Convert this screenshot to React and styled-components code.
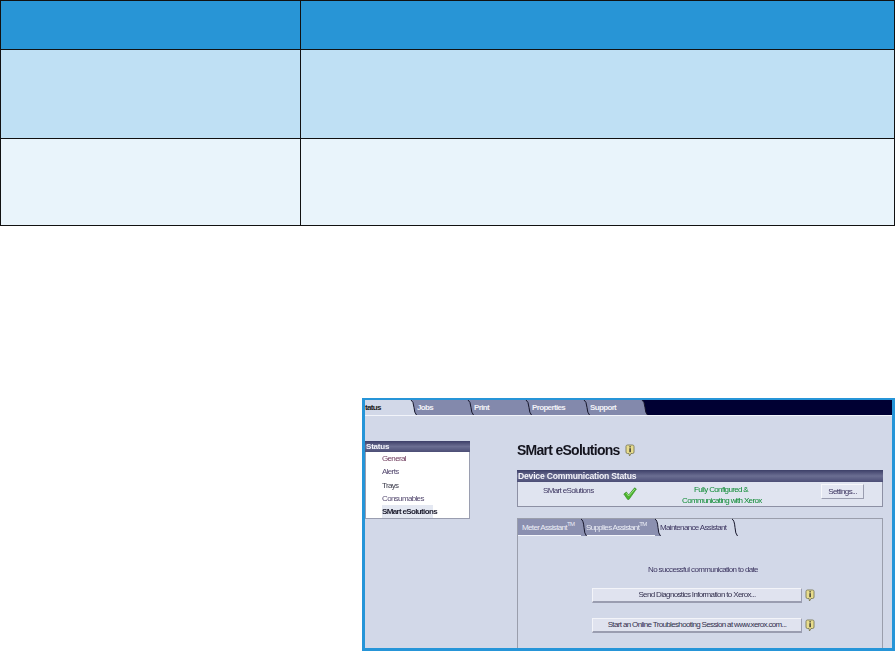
import React from "react";
import styled, { createGlobalStyle } from "styled-components";

const GlobalStyle = createGlobalStyle`
  html, body {
    margin: 0;
    padding: 0;
    background: #fff;
    overflow: hidden;
    font-family: "Liberation Sans", Arial, sans-serif;
  }
`;

const Page = styled.div`
  width: 895px;
  height: 651px;
  overflow: hidden;
`;

const Table = styled.div`
  display: grid;
  grid-template-columns: 300px 594px;
  grid-template-rows: 48px 89px 87px;
  border-top: 1px solid #111;
  border-right: 1px solid #111;
  border-bottom: 1px solid #111;
  width: 895px;
  box-sizing: border-box;
`;

const Cell = styled.div`
  background: ${(p) => p.$bg};
  border-left: 1px solid #111;
  border-top: ${(p) => (p.$ruled ? "1px solid #111" : "0")};
`;

const Shot = styled.div`
  margin: 172px 0 0 362px;
  width: 533px;
  height: 253px;
  box-sizing: border-box;
  border: 3px solid #2695d8;
  border-top-width: 2px;
  background: #d2d8e8;
  overflow: hidden;
  font-size: 8px;
  letter-spacing: -0.65px;
  color: #3c3560;
  white-space: nowrap;
`;

const Blurred = styled.div`
  filter: blur(0.4px);
`;

const TopBar = styled.div`
  display: flex;
  height: 15px;
  background: #000033;
  border-bottom: 1px solid #f2f4fa;
`;

const TopTab = styled.div`
  position: relative;
  width: ${(p) => p.$w}px;
  background: ${(p) => (p.$active ? "#d2d8e8" : "#8389ac")};
  color: ${(p) => (p.$active ? "#222" : "#f0f0f6")};
  font-weight: bold;
  line-height: 15px;
  padding-left: ${(p) => p.$pad}px;
  box-sizing: border-box;
`;

const Curve = styled.svg`
  position: absolute;
  right: -5px;
  top: 0;
  overflow: visible;
  z-index: 1;
`;

const Body = styled.div`
  display: flex;
  padding-top: 25px;
`;

const Side = styled.div`
  width: 105px;
  margin-right: 47px;
  flex: none;
`;

const BarHead = styled.div`
  height: ${(p) => p.$h}px;
  background: linear-gradient(#3d3f68, #6b6e92 50%, #4c4e76);
  color: #f4f4fa;
  font-size: ${(p) => p.$size}px;
  letter-spacing: -0.2px;
  font-weight: bold;
  line-height: ${(p) => p.$h}px;
  padding-left: 1px;
`;

const SideList = styled.div`
  background: #fff;
  border: 1px solid #9a9eb0;
  border-top: 0;
  padding: 0 0 0 16px;
  height: 66px;
`;

const SideItem = styled.div`
  height: 13.3px;
  line-height: 13.3px;
  color: ${(p) => p.$color || "#554a70"};
  font-weight: ${(p) => (p.$active ? "bold" : "normal")};
  background: ${(p) => (p.$active ? "#e4e8f2" : "transparent")};
  width: ${(p) => (p.$active ? "51px" : "auto")};
`;

const Main = styled.div`
  width: 366px;
  flex: none;
`;

const TitleRow = styled.div`
  display: flex;
  align-items: center;
  gap: 5px;
  height: 18px;
  margin-bottom: 11px;
`;

const Title = styled.div`
  font-size: 14px;
  font-weight: bold;
  color: #14141e;
  letter-spacing: -0.73px;
`;

const Panel = styled.div`
  background: #e0e4f0;
  border: 1px solid #8d90a4;
  border-top: 0;
  height: 24px;
  display: grid;
  grid-template-columns: 104px 60px 78px 1fr;
  align-items: center;
`;

const PanelName = styled.div`
  padding-left: 25px;
  margin-top: -7px;
`;

const Status = styled.div`
  color: #0c8a32;
  text-align: center;
  line-height: 10.5px;
  margin-top: 3px;
`;

const CheckWrap = styled.div`
  margin-left: 1px;
`;

const SmallButton = styled.div`
  width: 43px;
  height: 15px;
  margin-left: 61px;
  margin-top: -5px;
  box-sizing: border-box;
  background: #e4e7f2;
  border: 1px solid #f6f7fb;
  border-right-color: #9a9db0;
  border-bottom-color: #9a9db0;
  line-height: 13px;
  text-align: center;
`;

const TabPanel = styled.div`
  margin-top: 11px;
  height: 140px;
  border: 1px solid #9a9eac;
  border-bottom: 0;
`;

const SubTabs = styled.div`
  display: flex;
  height: 17px;
`;

const SubTab = styled.div`
  position: relative;
  width: ${(p) => p.$w}px;
  box-sizing: border-box;
  padding-left: 4px;
  line-height: 17px;
  background: ${(p) => (p.$active ? "transparent" : "#8b90b0")};
  color: ${(p) => (p.$active ? "#3c3560" : "#eceef6")};
  border-bottom: ${(p) => (p.$active ? "0" : "1px solid #f4f6fb")};

  sup {
    font-size: 6px;
    line-height: 0;
  }
`;

const Message = styled.div`
  text-align: center;
  margin-top: 28px;
  padding-left: 6px;
  height: 12px;
  line-height: 12px;
`;

const ActionRow = styled.div`
  display: flex;
  align-items: center;
  gap: 3px;
  margin: ${(p) => p.$top}px 0 0 74px;
`;

const ActionButton = styled.div`
  width: 210px;
  height: 15px;
  box-sizing: border-box;
  background: #e0e3ef;
  border-top: 1px solid #f3f4f9;
  border-left: 1px solid #f3f4f9;
  border-right: 1px solid #9a9db0;
  border-bottom: 2px solid #9a9db0;
  text-align: center;
  line-height: 12px;
  color: #33304e;
`;

function Info() {
  return (
    <svg width="10" height="13" viewBox="0 0 10 13">
      <path d="M1 2.5 Q1 1 2.5 1 H7.5 Q9 1 9 2.5 V8 Q9 9.5 7.5 9.5 H6 L4.5 12 L4 9.5 H2.5 Q1 9.5 1 8 Z" fill="#e8dc8c" stroke="#7c7a58" strokeWidth="0.9" />
      <rect x="4.4" y="4.2" width="1.4" height="4" fill="#333" />
      <rect x="4.4" y="2.2" width="1.4" height="1.2" fill="#333" />
    </svg>
  );
}

function Check() {
  return (
    <svg width="14" height="13" viewBox="0 0 14 13">
      <path d="M0.8 7 L3.4 5 L5.6 8 L11.6 0.8 L13.4 2 L6 12.4 L4.6 12.4 Z" fill="#4cb42e" stroke="#2f8a22" strokeWidth="0.6" />
      <path d="M3.4 6 L5.6 9 L11.8 2" fill="none" stroke="#a4e488" strokeWidth="0.9" />
    </svg>
  );
}

function TabCurve({ h, fill }) {
  return (
    <Curve width="6" height={h} viewBox={`0 0 6 ${h}`}>
      <path d={`M0 0 Q2.4 1 3 ${h * 0.5} Q3.4 ${h - 2} 5.5 ${h} H0 Z`} fill={fill} />
      <path d={`M0 0 Q2.4 1 3 ${h * 0.5} Q3.4 ${h - 2} 5.5 ${h}`} fill="none" stroke="#15152a" strokeWidth="1" />
    </Curve>
  );
}

const topTabs = [
  { label: "tatus", w: 47, pad: 0, active: true, fill: "#d2d8e8" },
  { label: "Jobs", w: 57, pad: 5, fill: "#8389ac" },
  { label: "Print", w: 58, pad: 5, fill: "#8389ac" },
  { label: "Properties", w: 58, pad: 5, fill: "#8389ac" },
  { label: "Support", w: 58, pad: 5, fill: "#8389ac" },
];

const sideItems = [
  { label: "General", color: "#6e3a5c" },
  { label: "Alerts" },
  { label: "Trays", color: "#3a3a4a" },
  { label: "Consumables" },
  { label: "SMart eSolutions", active: true, color: "#222233" },
];

export default function App() {
  return (
    <Page>
      <GlobalStyle />
      <Table>
        <Cell $bg="#2895d6" />
        <Cell $bg="#2895d6" />
        <Cell $bg="#bfe0f4" $ruled />
        <Cell $bg="#bfe0f4" $ruled />
        <Cell $bg="#e9f4fb" $ruled />
        <Cell $bg="#e9f4fb" $ruled />
      </Table>
      <Shot>
        <Blurred>
          <TopBar>
            {topTabs.map((t) => (
              <TopTab key={t.label} $w={t.w} $pad={t.pad} $active={t.active}>
                {t.label}
                <TabCurve h={15} fill={t.fill} />
              </TopTab>
            ))}
          </TopBar>
          <Body>
            <Side>
              <BarHead $h={11} $size={8}>Status</BarHead>
              <SideList>
                {sideItems.map((s) => (
                  <SideItem key={s.label} $color={s.color} $active={s.active}>
                    {s.label}
                  </SideItem>
                ))}
              </SideList>
            </Side>
            <Main>
              <TitleRow>
                <Title>SMart eSolutions</Title>
                <Info />
              </TitleRow>
              <BarHead $h={12} $size={8.6}>Device Communication Status</BarHead>
              <Panel>
                <PanelName>SMart eSolutions</PanelName>
                <CheckWrap>
                  <Check />
                </CheckWrap>
                <Status>
                  Fully Configured &amp;
                  <br />
                  Communicating with Xerox
                </Status>
                <SmallButton>Settings...</SmallButton>
              </Panel>
              <TabPanel>
                <SubTabs>
                  <SubTab $w={64}>
                    Meter Assistant<sup>TM</sup>
                    <TabCurve h={17} fill="#8b90b0" />
                  </SubTab>
                  <SubTab $w={74}>
                    Supplies Assistant<sup>TM</sup>
                    <TabCurve h={17} fill="#8b90b0" />
                  </SubTab>
                  <SubTab $w={77} $active>
                    Maintenance Assistant
                    <TabCurve h={17} fill="#d2d8e8" />
                  </SubTab>
                </SubTabs>
                <Message>No successful communication to date</Message>
                <ActionRow $top={12}>
                  <ActionButton>Send Diagnostics Information to Xerox...</ActionButton>
                  <Info />
                </ActionRow>
                <ActionRow $top={15}>
                  <ActionButton>Start an Online Troubleshooting Session at www.xerox.com...</ActionButton>
                  <Info />
                </ActionRow>
                <ActionRow $top={15}>
                  <ActionButton />
                </ActionRow>
              </TabPanel>
            </Main>
          </Body>
        </Blurred>
      </Shot>
    </Page>
  );
}
